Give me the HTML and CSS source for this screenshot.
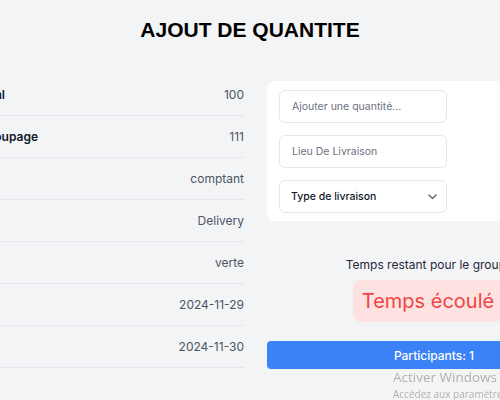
FILE: index.html
```html
<!DOCTYPE html>
<html lang="fr">
<head>
<meta charset="utf-8">
<title>Ajout de quantité</title>
<link rel="stylesheet" href="styles.css">
</head>
<body>
  <h1 class="title">AJOUT DE QUANTITE</h1>
  <div class="layout">
    <div class="details">
      <div class="row"><span class="label">Prix normal</span><span class="value">100</span></div>
      <div class="row"><span class="label">Prix de groupage</span><span class="value">111</span></div>
      <div class="row"><span class="label">Mode</span><span class="value">comptant</span></div>
      <div class="row"><span class="label">Type</span><span class="value">Delivery</span></div>
      <div class="row"><span class="label">Statut</span><span class="value">verte</span></div>
      <div class="row"><span class="label">Début</span><span class="value">2024-11-29</span></div>
      <div class="row"><span class="label">Fin</span><span class="value">2024-11-30</span></div>
    </div>
    <div class="side">
      <form class="card">
        <input class="field" type="text" placeholder="Ajouter une quantité...">
        <input class="field" type="text" placeholder="Lieu De Livraison">
        <div class="select-wrap">
          <select class="field select">
            <option>Type de livraison</option>
          </select>
          <svg class="chevron" width="9" height="6" viewBox="0 0 9 6"><path d="M1 1l3.5 3.5L8 1" fill="none" stroke="#6b7280" stroke-width="1.6" stroke-linecap="round" stroke-linejoin="round"/></svg>
        </div>
      </form>
      <div class="timer">
        <p class="timer-label">Temps restant pour le groupage</p>
        <div class="expired">Temps écoulé</div>
      </div>
      <button class="participants" type="button">Participants: 1</button>
    </div>
  </div>
  <div class="watermark">
    <div class="wm-title">Activer Windows</div>
    <div class="wm-sub">Accédez aux paramètres pour activer Windows.</div>
  </div>
</body>
</html>
```
FILE: styles.css
```css
html, body {
  overflow: hidden;
}
body {
  margin: 0;
  width: 500px;
  height: 400px;
  background: #f3f4f6;
  font-family: Inter, "Noto Sans", sans-serif;
  color: #111827;
}
.title {
  margin: 17px 0 32px;
  text-align: center;
  font-family: "Liberation Sans", Arial, sans-serif;
  font-size: 21px;
  font-weight: 700;
  line-height: 25px;
  color: #000;
}
.layout {
  display: grid;
  grid-template-columns: 305px 334px;
  column-gap: 23px;
  margin-left: -61px;
  align-items: start;
}
.details {
  display: flex;
  flex-direction: column;
}
.row {
  display: flex;
  justify-content: space-between;
  align-items: center;
  height: 41px;
  border-bottom: 1px solid #e5e7eb;
  font-size: 12px;
}
.label {
  font-weight: 600;
  color: #111827;
}
.value {
  color: #4b5563;
}
.side {
  display: flex;
  flex-direction: column;
}
.card {
  margin: 7px 0 0;
  background: #fff;
  border-radius: 8px;
  padding: 9px 12px 8px;
  display: flex;
  flex-direction: column;
  gap: 12px;
}
.field {
  box-sizing: border-box;
  width: 168px;
  height: 33px;
  border: 1px solid #e5e7eb;
  border-radius: 6px;
  background: #fff;
  padding: 0 12px;
  font-family: Inter, sans-serif;
  font-size: 10.5px;
  color: #111827;
  outline: none;
}
.field::placeholder {
  color: #6b7280;
}
.select-wrap {
  position: relative;
  width: 168px;
}
.select {
  appearance: none;
  -webkit-appearance: none;
  padding-left: 11px;
  font-weight: 500;
}
.chevron {
  position: absolute;
  right: 10px;
  top: 14px;
  pointer-events: none;
}
.timer {
  margin-top: 34px;
  display: flex;
  flex-direction: column;
  align-items: center;
}
.timer-label {
  margin: 0 0 0 5px;
  font-size: 12px;
  line-height: 20px;
  color: #1f2937;
}
.expired {
  margin: 5px 12px 0 0;
  background: #fee2e2;
  color: #ef4444;
  border-radius: 8px;
  padding: 5px 9px;
  font-size: 20px;
  line-height: 32px;
}
.participants {
  margin-top: 19px;
  height: 28px;
  border: none;
  border-radius: 4px;
  background: #3b82f6;
  color: #fff;
  font-family: Inter, sans-serif;
  font-size: 12px;
  font-weight: 500;
}
.watermark {
  position: fixed;
  left: 393px;
  top: 368px;
  color: rgba(120, 120, 120, 0.55);
  font-family: "Open Sans", sans-serif;
  white-space: nowrap;
}
.wm-title {
  font-size: 13.5px;
  line-height: 18px;
}
.wm-sub {
  font-size: 10px;
  line-height: 16px;
}
```
